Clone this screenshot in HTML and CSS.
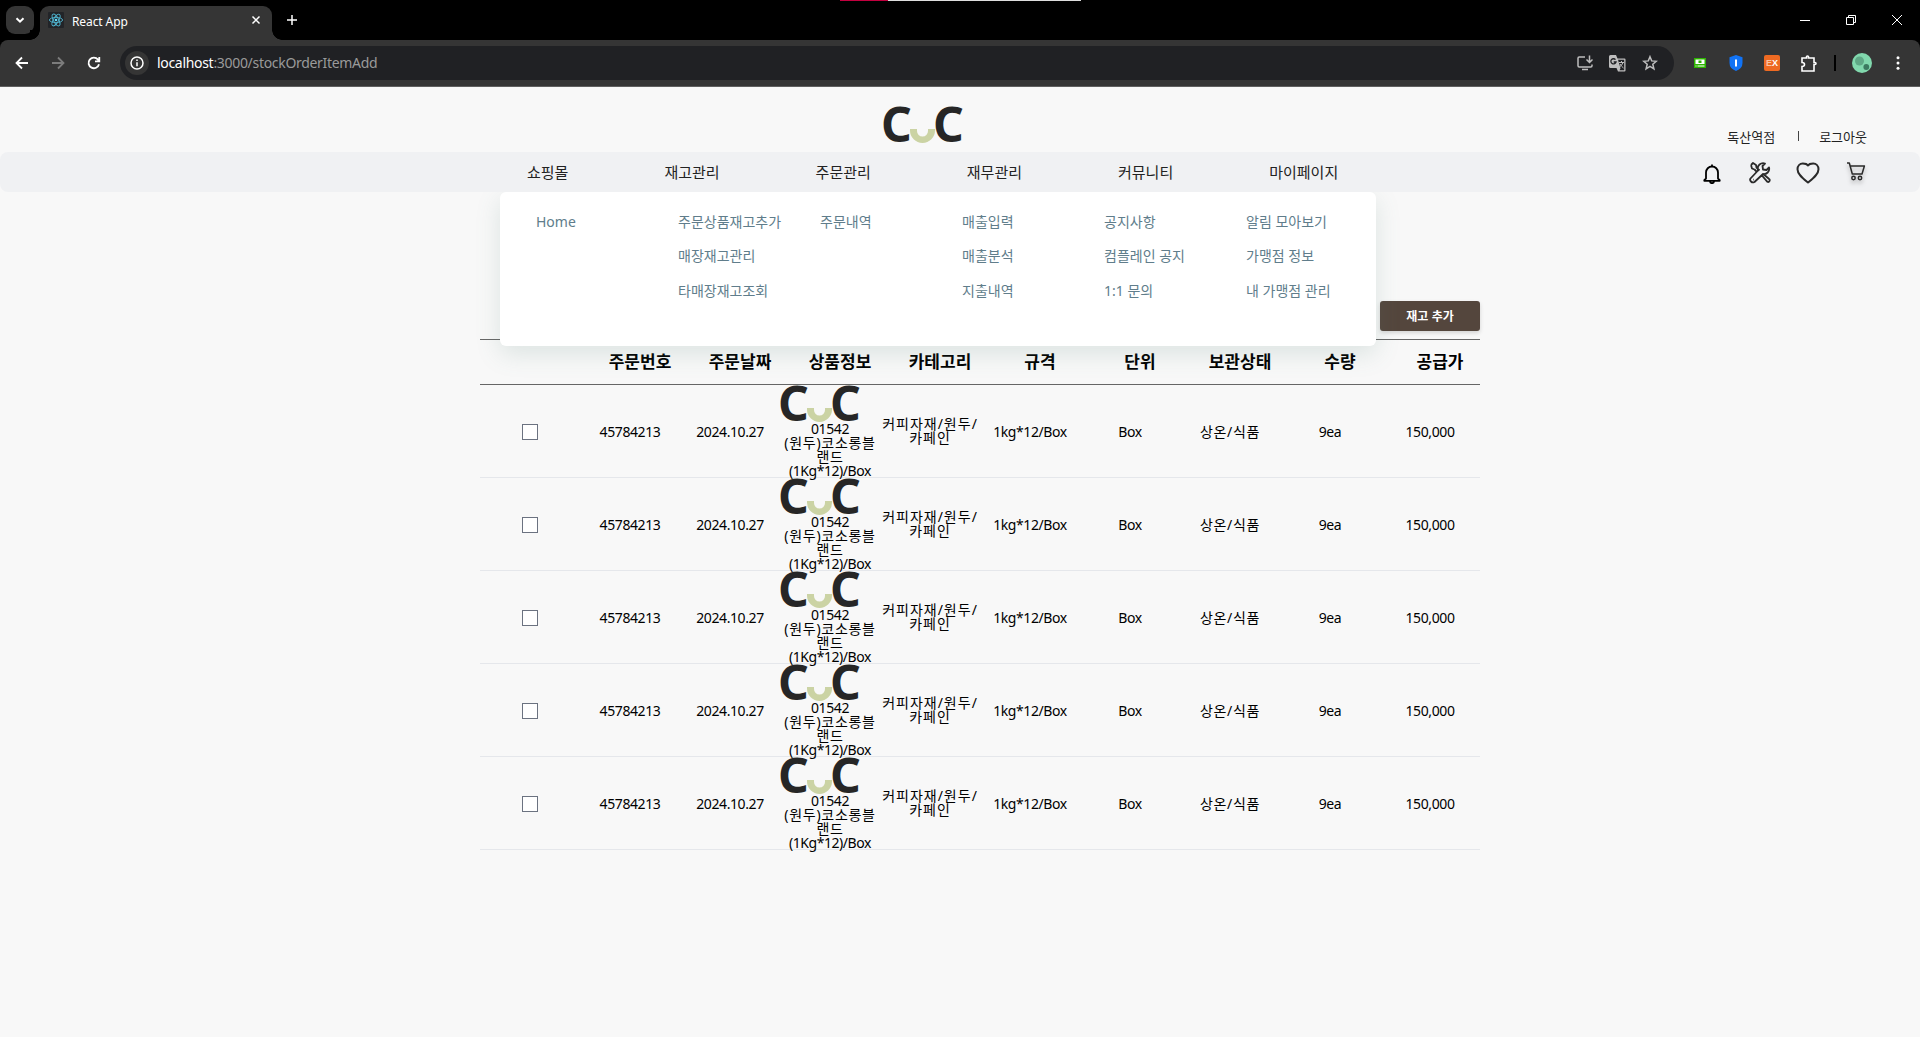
FILE: index.html
```
<!DOCTYPE html>
<html lang="ko">
  <head>
    <meta charset="UTF-8" />
    <meta name="viewport" content="width=device-width, initial-scale=1" />
    <title>React App</title>
    <link rel="stylesheet" href="styles.css">
  </head>
  <body>
    <div class="browser">
      <div class="titlebar">
        <div class="top-line"></div>
        <div class="tab-search">
          <svg width="28" height="28" viewBox="0 0 28 28"><path d="M10.500 12.200l3.500 3.500 3.500-3.500" /></svg>
        </div>
        <div class="tab">
          <svg class="favicon" width="16" height="16" viewBox="0 0 16 16">
            <rect width="16" height="16" rx="1" fill="#222428" />
            <g fill="none" stroke="#4fb4cf" stroke-width=".9">
              <ellipse cx="8" cy="8" rx="6.600" ry="2.600" />
              <ellipse cx="8" cy="8" rx="6.600" ry="2.600" transform="rotate(60 8 8)" />
              <ellipse cx="8" cy="8" rx="6.600" ry="2.600" transform="rotate(120 8 8)" />
            </g>
            <circle cx="8" cy="8" r="1.300" fill="#61dafb" />
          </svg>
          <span class="tab-title">React App</span>
          <svg width="10" height="10" viewBox="0 0 10 10"><path d="M1.500 1.500l7 7M8.500 1.500l-7 7" /></svg>
        </div>
        <svg class="new-tab" width="12" height="12" viewBox="0 0 12 12"><path d="M6 1v10M1 6h10" /></svg>
        <div class="window-buttons">
          <svg width="10" height="10" viewBox="0 0 10 10"><path d="M0 5.500h10" /></svg>
          <svg width="10" height="10" viewBox="0 0 10 10"><path d="M.5 2.500h7v7h-7zM2.500 2.500v-2h7v7h-2" /></svg>
          <svg width="10" height="10" viewBox="0 0 10 10"><path d="M0 0l10 10M10 0L0 10" /></svg>
        </div>
      </div>
      <div class="toolbar">
        <div class="nav-buttons">
          <svg width="14" height="14" viewBox="0 0 14 14"><path d="M13 7H2M7 1.500L1.500 7 7 12.500" /></svg>
          <svg class="disabled" width="14" height="14" viewBox="0 0 14 14"><path d="M1 7h11M7 1.500L12.500 7 7 12.500" /></svg>
          <svg width="14" height="14" viewBox="0 0 14 14"><path d="M12 8.200A5.300 5.300 0 1 1 11 3.600l1 1M12.300 1v4.300H8" /></svg>
        </div>
        <div class="omnibox">
          <div class="site-info">
            <svg width="14" height="14" viewBox="0 0 14 14"><circle cx="7" cy="7" r="6" /><path d="M7 6.200v4M7 3.500v1.500" /></svg>
          </div>
          <p class="url"><b>localhost</b>:3000/stockOrderItemAdd</p>
          <div class="omnibox-icons">
            <svg width="16" height="16" viewBox="0 0 16 16"><path d="M8 2H2.200Q1 2 1 3.200v7.600Q1 12 2.200 12h11.600q1.200 0 1.200-1.200V9.500M5 14.500h6M12.500.5v6.500M9.500 4.500l3 3 3-3" /></svg>
            <svg width="17" height="17" viewBox="0 0 17 17">
              <path d="M1.500 0H7l1.500 3.500h7q1 0 1 1v11q0 1-1 1H9L7.500 13h-6q-1.500 0-1.500-1.500v-10Q0 0 1.500 0z" fill="#bdbdbd" stroke="none" />
              <path d="M9 4.800h6.200v10.400h-4.700l1-2z" fill="#202124" stroke="none" />
              <path d="M6.500 4.700A2.600 2.600 0 1 0 7 7H4.700" stroke="#202124" stroke-width="1.300" />
              <path d="M10 7.500h5M12.500 6v1.500M14 7.500q-1 3-3.500 4.500M11 9q1.500 2.500 3.500 4" stroke-width="1" />
            </svg>
            <svg width="16" height="16" viewBox="0 0 16 16"><path d="M8 1.700l1.700 4.200 4.600.4-3.500 3 1.100 4.500L8 11.400l-3.900 2.400 1.100-4.500-3.500-3 4.600-.4z" /></svg>
          </div>
        </div>
        <div class="extensions">
          <svg width="12" height="10" viewBox="0 0 12 10"><path d="M0 0h12v10H0z" fill="#2db400" /><path d="M1.500 1.500h9v4.500h-9zM1.500 7.500h1v1h-1zM3.500 7.500h7v1h-7z" fill="#fff" /><path d="M4.500 2.500h3v2.500h-3z" fill="#2db400" /></svg>
          <svg class="shield" width="14" height="16" viewBox="0 0 14 16"><path d="M7 0l6.500 2.300V8q0 5.500-6.500 8Q.5 13.500.5 8V2.300z" fill="#1173f5" /><path d="M6 4.500h2v7H6z" fill="#fff" /></svg>
          <span class="ext-ex"><i>E</i>X</span>
          <svg class="puzzle" width="17" height="17" viewBox="0 0 17 17"><path d="M2 3h4.500V1.800q0-.8 1-.8t1 .8V3H14v4.500h1q1 0 1 1t-1 1h-1V16H2v-4.500q2.500 0 2.500-2T2 7.500z" /></svg>
          <span class="divider"></span>
          <svg class="avatar" width="20" height="20" viewBox="0 0 20 20"><circle cx="10" cy="10" r="10" fill="#81d8ad" /><circle cx="7.500" cy="8" r="4.500" fill="#5fa886" /><circle cx="14.300" cy="14" r="2.900" fill="#3c7a60" /></svg>
          <svg class="dots" width="4" height="14" viewBox="0 0 4 14"><circle cx="2" cy="1.800" r="1.500" /><circle cx="2" cy="7" r="1.500" /><circle cx="2" cy="12.200" r="1.500" /></svg>
        </div>
      </div>
    </div>

    <header class="header">
      <div class="logo">
        <span>C</span>
        <svg width="25" height="14" viewBox="0 0 25 14"><path d="M0 0h7v2a5.500 5.500 0 0 0 11 0V0h7v1.500a12.500 12.500 0 0 1-25 0z" /></svg>
        <span>C</span>
      </div>
      <div class="user-links">
        <a>독산역점</a>
        <span class="bar"></span>
        <a>로그아웃</a>
      </div>
    </header>

    <nav class="nav">
      <ul class="nav-list">
        <li>쇼핑몰</li>
        <li>재고관리</li>
        <li>주문관리</li>
        <li>재무관리</li>
        <li>커뮤니티</li>
        <li>마이페이지</li>
      </ul>
      <div class="nav-icons">
        <svg class="bell" viewBox="0 0 18 20"><path d="M9 .5v2M3 14.500V8.500a6 6 0 0 1 12 0v6l1.700 1.700v.6H1.300v-.6zM7 17.500q.3 1.700 2 1.700t2-1.700" /></svg>
        <svg class="tools" viewBox="0 0 22 22"><path d="M2 3l2-2 3 2 .5 2.500 3 3M5.500 7.500L3 6.500 2 3M5.500 7.500L8 10M12.500 13l5.700 6.700q1.700.8 2.300-.7.600-1.300-.4-2l-5.800-5M9 8.500Q8 4.500 10.500 2.500T16 1.500L13.500 4l.5 3.500 3.500.5L20 5.500q.8 3-1.300 5T14 12l-8.500 8q-2 1-3.500-.5t-.5-3z" /><path d="M4 17.700h.6" /></svg>
        <svg class="heart" viewBox="0 0 24 22"><path d="M12 20.500C7 16.500 1.500 12.500 1.500 7.200 1.500 3.800 3.800 1.500 6.800 1.500c2.200 0 4.200 .4 5.200 2 1-1.600 3-2 5.200-2 3 0 5.300 2.300 5.300 5.700 0 5.300-5.500 9.300-10.500 13.300z" /></svg>
        <svg class="cart" viewBox="0 0 20 19"><path d="M1 1h2.300l3 11h9.700l2.400-8H4.300M6.500 12h9.500" /><circle cx="7.500" cy="16" r="1.700" /><circle cx="14" cy="16" r="1.700" /></svg>
      </div>
      <div class="mega-menu">
        <ul><li>Home</li></ul>
        <ul><li>주문상품재고추가</li><li>매장재고관리</li><li>타매장재고조회</li></ul>
        <ul><li>주문내역</li></ul>
        <ul><li>매출입력</li><li>매출분석</li><li>지출내역</li></ul>
        <ul><li>공지사항</li><li>컴플레인 공지</li><li>1:1 문의</li></ul>
        <ul><li>알림 모아보기</li><li>가맹점 정보</li><li>내 가맹점 관리</li></ul>
      </div>
    </nav>

    <main class="content">
      <button class="add-btn">재고 추가</button>
      <div class="table-head">
        <span></span>
        <span>주문번호</span>
        <span>주문날짜</span>
        <span>상품정보</span>
        <span>카테고리</span>
        <span>규격</span>
        <span>단위</span>
        <span>보관상태</span>
        <span>수량</span>
        <span>공급가</span>
      </div>
      <div id="rows"></div>
    </main>

    <script>
      const items = Array(5).fill({
        no: "45784213",
        date: "2024.10.27",
        code: "01542",
        name: "(원두)코소롱블<br>랜드",
        size: "(1Kg*12)/Box",
        category: "커피자재/원두/<br>카페인",
        spec: "1kg*12/Box",
        unit: "Box",
        storage: "상온/식품",
        count: "9ea",
        price: "150,000",
      });
      const logo = document.querySelector(".logo").outerHTML;

      document.getElementById("rows").innerHTML = items
        .map(
          (item) => `
        <div class="table-row">
          <div><input type="checkbox" /></div>
          <div>${item.no}</div>
          <div>${item.date}</div>
          <div class="product">
            ${logo}
            <p>${item.code}</p>
            <p class="kr">${item.name}</p>
            <p>${item.size}</p>
          </div>
          <div class="kr category">${item.category}</div>
          <div>${item.spec}</div>
          <div>${item.unit}</div>
          <div class="kr">${item.storage}</div>
          <div>${item.count}</div>
          <div>${item.price}</div>
        </div>`
        )
        .join("");
    </script>
  </body>
</html>
```
FILE: styles.css
```
* {
  margin: 0;
  padding: 0;
  box-sizing: border-box;
}
body {
  min-height: 100vh;
  font-family: "Noto Sans", "Noto Sans CJK KR", sans-serif;
  background: #f8f8f8;
  color: #000;
  overflow: hidden;
}
ul {
  list-style: none;
}
svg {
  display: block;
  flex-shrink: 0;
}

/* browser frame */
.browser {
  height: 87px;
  background: #000;
  border-bottom: 1px solid #5f5f5f;
}
.browser svg {
  fill: none;
  stroke: #fff;
  stroke-width: 1.5;
}
.titlebar {
  position: relative;
  height: 40px;
  display: flex;
  padding: 6px 18px 0 6px;
}
.top-line {
  position: absolute;
  top: 0;
  left: 840px;
  width: 241px;
  height: 1px;
  background: linear-gradient(90deg, #c2003f 48px, #dedede 48px);
}
.tab-search {
  width: 28px;
  height: 28px;
  border-radius: 9px;
  background: #353535;
}
.tab-search svg {
  stroke-width: 2;
}
.tab {
  position: relative;
  width: 232px;
  height: 34px;
  margin-left: 6px;
  padding: 0 11px 6px 8px;
  display: flex;
  align-items: center;
  border-radius: 9px 9px 0 0;
  background: #353535;
}
.tab::before,
.tab::after {
  content: "";
  position: absolute;
  bottom: 0;
  width: 10px;
  height: 10px;
}
.tab::before {
  left: -10px;
  background: radial-gradient(circle at 0 0, #000 9.5px, #353535 10px);
}
.tab::after {
  right: -10px;
  background: radial-gradient(circle at 100% 0, #000 9.5px, #353535 10px);
}
.tab .favicon {
  stroke: none;
}
.tab-title {
  flex: 1;
  padding: 2px 0 0 8px;
  font-size: 12px;
  letter-spacing: -0.1px;
  color: #fff;
}
.new-tab {
  margin: 8px 0 0 14px;
}
.window-buttons {
  display: flex;
  gap: 36px;
  margin: 9px 0 0 auto;
}
.browser .window-buttons svg {
  stroke-width: 1;
}
.toolbar {
  height: 46px;
  display: flex;
  align-items: center;
  padding: 0 20px 0 15px;
  border-radius: 8px 8px 0 0;
  background: #353535;
}
.nav-buttons {
  display: flex;
  gap: 22px;
  width: 105px;
}
.browser .nav-buttons svg {
  stroke-width: 1.8;
}
.browser .nav-buttons .disabled {
  stroke: #7c7c7c;
}
.omnibox {
  width: 1554px;
  height: 34px;
  display: flex;
  align-items: center;
  padding: 0 16px 0 5px;
  border-radius: 17px;
  background: #202124;
}
.site-info {
  width: 24px;
  height: 24px;
  padding: 5px;
  border-radius: 50%;
  background: #353535;
}
.url {
  flex: 1;
  padding: 0 0 1px 8px;
  font-size: 14px;
  letter-spacing: -0.31px;
  color: #9a9a9a;
}
.url b {
  font-weight: 400;
  color: #fff;
}
.omnibox-icons {
  display: flex;
  gap: 16px;
}
.browser .omnibox-icons svg {
  stroke: #bdbdbd;
}
.extensions {
  display: flex;
  align-items: center;
  margin-left: 20px;
}
.browser .extensions svg {
  stroke: none;
}
.extensions .shield {
  margin-left: 23px;
}
.ext-ex {
  width: 16px;
  height: 16px;
  margin-left: 21px;
  border-radius: 2px;
  background: #ee6a22;
  color: #fff;
  font: bold 9px/16px "Liberation Sans", sans-serif;
  text-align: center;
}
.ext-ex i {
  font-style: normal;
  color: #f9c3a3;
}
.browser .extensions .puzzle {
  margin-left: 20px;
  stroke: #fff;
  stroke-width: 1.6;
}
.divider {
  width: 2px;
  height: 16px;
  margin: 0 16px 0 17px;
  background: #000;
}
.browser .dots {
  margin-left: 24px;
  fill: #fff;
}

/* header */
.header {
  height: 65px;
  display: flex;
  padding-top: 20px;
}
.logo {
  width: 80px;
  height: 36px;
  display: flex;
  align-items: flex-end;
}
.logo span {
  width: 29px;
  margin-left: -2px;
  padding-bottom: 2px;
  font: bold 48px/34px "Noto Sans", sans-serif;
  letter-spacing: 0;
  color: #262626;
}
.logo svg {
  fill: #cbd3a4;
}
.header .logo {
  margin-left: 883px;
}
.user-links {
  display: flex;
  align-items: center;
  margin: 19px 53px 0 auto;
  height: 20px;
  font-size: 13px;
  color: #222;
}
.user-links .bar {
  width: 1px;
  height: 10px;
  margin: 0 20px 0 23px;
  background: #444;
}

/* navigation */
.nav {
  position: relative;
  height: 40px;
  display: flex;
  justify-content: space-between;
  align-items: center;
  padding: 0 54px 0 527px;
  border-radius: 8px;
  background: #f0f1f3;
}
.nav-list {
  display: flex;
  gap: 96px;
  padding-bottom: 2px;
  font-size: 15px;
  color: #222;
}
.nav-icons {
  display: flex;
  align-items: flex-start;
  height: 20px;
}
.nav-icons svg {
  fill: none;
  stroke: #2a2a2a;
  stroke-width: 1.8;
  stroke-linejoin: round;
}
.bell {
  width: 18px;
  height: 20px;
  margin: 2px 28px 0 0;
}
.nav-icons .bell {
  stroke: #000;
}
.tools {
  width: 22px;
  height: 22px;
  margin-right: 25px;
}
.heart {
  width: 24px;
  height: 22px;
  margin-right: 26px;
}
.nav-icons .heart {
  stroke-width: 2;
}
.cart {
  width: 20px;
  height: 19px;
  filter: drop-shadow(0 3px 2px rgba(0, 0, 0, 0.25));
}
.nav-icons .cart {
  stroke-width: 1.5;
}
.mega-menu {
  position: absolute;
  z-index: 10;
  top: 40px;
  left: 500px;
  width: 876px;
  height: 154px;
  display: grid;
  grid-template-columns: repeat(6, 142px);
  padding: 13px 0 0 36px;
  border-radius: 6px;
  background: #fff;
  box-shadow: 0 8px 24px rgba(96, 139, 130, 0.18);
  clip-path: inset(0 -40px -40px -40px);
  font-size: 14px;
  line-height: 34.4px;
  font-weight: 400;
  color: #607d8b;
  white-space: nowrap;
}

/* stock table */
.content {
  width: 1000px;
  margin-left: 480px;
  padding-top: 109px;
}
.add-btn {
  display: block;
  width: 100px;
  height: 30px;
  margin: 0 0 8px auto;
  padding-bottom: 2px;
  border: none;
  border-radius: 3px;
  background: #54463d;
  box-shadow: 0 2px 4px rgba(0, 0, 0, 0.15);
  color: #fff;
  font: bold 12px "Noto Sans CJK KR", sans-serif;
}
.table-head,
.table-row {
  display: grid;
  grid-template-columns: repeat(10, 100px);
  align-items: center;
  text-align: center;
}
.table-head {
  height: 46px;
  padding: 0 0 3px 10px;
  border-top: 1px solid #666;
  border-bottom: 1px solid #666;
  font-size: 17px;
  font-weight: 600;
}
.table-row {
  height: 93px;
  padding-top: 1px;
  border-bottom: 1px solid #e5e7eb;
  font-size: 14px;
  line-height: 14px;
  letter-spacing: -0.4px;
}
.product {
  height: 92px;
}
.product p {
  white-space: nowrap;
}
.product p:last-child {
  letter-spacing: -0.45px;
}
.table-row .kr {
  letter-spacing: 0.7px;
  white-space: nowrap;
}
.table-row .category {
  padding-bottom: 2px;
  letter-spacing: 1px;
}
.table-row input {
  appearance: none;
  display: block;
  width: 16px;
  height: 16px;
  margin: 0 auto;
  border: 1px solid #6b7280;
  background: #fff;
}
```
